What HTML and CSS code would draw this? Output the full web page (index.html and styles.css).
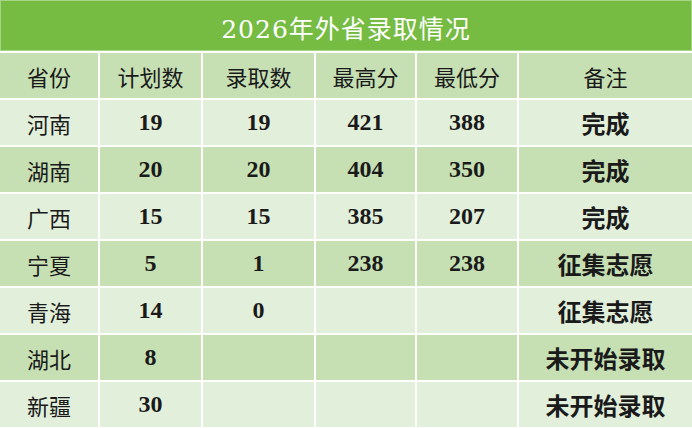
FILE: index.html
```html
<!DOCTYPE html>
<html lang="zh">
<head>
<meta charset="utf-8">
<link rel="stylesheet" href="styles.css">
</head>
<body>
<div class="sheet">
  <div class="title">2026年外省录取情况</div>
  <div class="grid">
    <div class="row head">
      <div>省份</div><div>计划数</div><div>录取数</div><div>最高分</div><div>最低分</div><div>备注</div>
    </div>
    <div class="row odd">
      <div class="prov">河南</div><div>19</div><div>19</div><div>421</div><div>388</div><div class="note">完成</div>
    </div>
    <div class="row even">
      <div class="prov">湖南</div><div>20</div><div>20</div><div>404</div><div>350</div><div class="note">完成</div>
    </div>
    <div class="row odd">
      <div class="prov">广西</div><div>15</div><div>15</div><div>385</div><div>207</div><div class="note">完成</div>
    </div>
    <div class="row even">
      <div class="prov">宁夏</div><div>5</div><div>1</div><div>238</div><div>238</div><div class="note">征集志愿</div>
    </div>
    <div class="row odd">
      <div class="prov">青海</div><div>14</div><div>0</div><div></div><div></div><div class="note">征集志愿</div>
    </div>
    <div class="row even">
      <div class="prov">湖北</div><div>8</div><div></div><div></div><div></div><div class="note">未开始录取</div>
    </div>
    <div class="row odd">
      <div class="prov">新疆</div><div>30</div><div></div><div></div><div></div><div class="note">未开始录取</div>
    </div>
  </div>
</div>
</body>
</html>
```
FILE: styles.css
```css
html, body {
  margin: 0;
  padding: 0;
  background: #ffffff;
}
.sheet {
  width: 692px;
  height: 428px;
  overflow: hidden;
  font-family: "Liberation Serif", "Noto Sans CJK SC", serif;
  color: #1a1a1a;
}
.title {
  border: 1px solid #a8d488;
  background: #76bc43;
  color: #ffffff;
  font-family: "DejaVu Serif", "Noto Sans CJK SC", serif;
  font-size: 25px;
  font-weight: normal;
  letter-spacing: 1px;
  display: flex;
  align-items: center;
  justify-content: center;
  padding-top: 2px;
  box-sizing: border-box;
  height: 51px;
}
.grid {
  display: flex;
  flex-direction: column;
  gap: 2px;
  padding-top: 2px;
}
.row {
  display: grid;
  grid-template-columns: 98px 101px 111px 99px 100px 1fr;
  column-gap: 2px;
  height: 45px;
}
.row > div {
  display: flex;
  align-items: center;
  justify-content: center;
  font-size: 24px;
  font-weight: bold;
}
.head > div,
.row > .prov {
  font-weight: normal;
  font-family: "Noto Sans CJK SC", sans-serif;
  font-size: 22px;
}
.row > .note {
  font-family: "Noto Sans CJK SC", sans-serif;
  font-size: 24px;
}
.head > div,
.even > div {
  background: #c6e0b4;
}
.odd > div {
  background: #e2efda;
}
```
